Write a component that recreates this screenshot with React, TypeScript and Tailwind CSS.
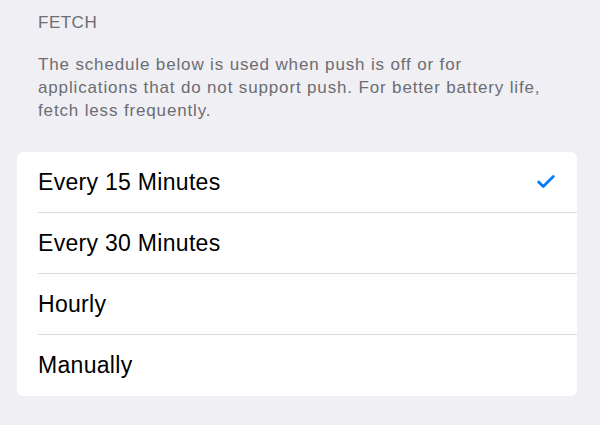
import { Check } from 'lucide-react'

const options = ['Every 15 Minutes', 'Every 30 Minutes', 'Hourly', 'Manually']

export default function App() {
  return (
    <div className="w-[600px] h-[425px] bg-[#efeff4] overflow-hidden" style={{ fontFamily: '"Liberation Sans", Arial, sans-serif' }}>
      <div className="pl-[38px] pr-2 pt-[13px] text-[17px] text-[#6d6d72]">
        <div className="leading-[20px] tracking-[0.5px]">FETCH</div>
        <p className="mt-[20px] leading-[23px] tracking-[0.85px]">
          The schedule below is used when push is off or for
          <br />
          applications that do not support push. For better battery life,
          <br />
          fetch less frequently.
        </p>
      </div>

      <div className="mx-[17px] mt-[30px] w-[560px] rounded-md bg-white">
        {options.map((label, i) => (
          <div key={label} className="pl-[21px]">
            <div
              className={
                'h-[61px] flex items-center justify-between pr-[20px] text-[23px] tracking-[0.3px] text-black ' +
                (i < options.length - 1 ? 'border-b border-[#dadade]' : '')
              }
            >
              <span>{label}</span>
              {i === 0 && <Check size={22} strokeWidth={3} className="text-[#007aff]" />}
            </div>
          </div>
        ))}
      </div>
    </div>
  )
}
